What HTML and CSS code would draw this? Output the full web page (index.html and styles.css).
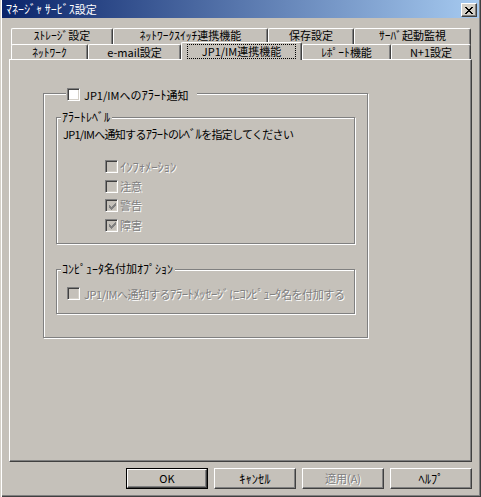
FILE: index.html
```html
<!DOCTYPE html>
<html lang="ja">
<head>
<meta charset="utf-8">
<title>ﾏﾈｰｼﾞｬ ｻｰﾋﾞｽ設定</title>
<link rel="stylesheet" href="styles.css">
</head>
<body>
<div class="window">
  <div class="titlebar">
    <span class="title"><span class="hk">ﾏﾈｰｼﾞｬ ｻｰﾋﾞｽ</span>設定</span>
    <span class="close"><svg width="8" height="7" viewBox="0 0 8 7" shape-rendering="crispEdges"><path d="M0 0h2v1H0zM6 0h2v1H6zM1 1h2v1H1zM5 1h2v1H5zM2 2h4v1H2zM3 3h2v1H3zM2 4h4v1H2zM1 5h2v1H1zM5 5h2v1H5zM0 6h2v1H0zM6 6h2v1H6z" fill="#000"/></svg></span>
  </div>
  <div class="tabs">
    <div class="tabrow row1">
      <div class="tab w102"><span class="hk">ｽﾄﾚｰｼﾞ</span>設定</div>
      <div class="tab w155"><span class="hk">ﾈｯﾄﾜｰｸｽｲｯﾁ</span>連携機能</div>
      <div class="tab w86">保存設定</div>
      <div class="tab w117"><span class="hk">ｻｰﾊﾞ</span>起動監視</div>
    </div>
    <div class="tabrow row2">
      <div class="tab w77"><span class="hk">ﾈｯﾄﾜｰｸ</span></div>
      <div class="tab w93">e-mail設定</div>
      <div class="tab active w121"><span class="focus">JP1/IM連携機能</span></div>
      <div class="tab w89"><span class="hk">ﾚﾎﾟｰﾄ</span>機能</div>
      <div class="tab w80">N+1設定</div>
    </div>
  </div>
  <div class="panel">
    <div class="group outer">
      <div class="legend legend-check">
        <span class="cb"></span><span class="label">JP1/IMへの<span class="hk">ｱﾗｰﾄ</span>通知</span>
      </div>
      <div class="group g1">
        <div class="legend"><span class="hk">ｱﾗｰﾄﾚﾍﾞﾙ</span></div>
        <p class="desc">JP1/IMへ通知する<span class="hk">ｱﾗｰﾄ</span>の<span class="hk">ﾚﾍﾞﾙ</span>を指定してください</p>
        <ul class="levels">
          <li class="check disabled"><span class="cb"></span><span class="label"><span class="hk">ｲﾝﾌｫﾒｰｼｮﾝ</span></span></li>
          <li class="check disabled"><span class="cb"></span><span class="label">注意</span></li>
          <li class="check disabled"><span class="cb checked"><svg width="7" height="7" viewBox="0 0 7 7" shape-rendering="crispEdges"><path d="M6 0h1v1H6zM5 1h2v1H5zM0 2h1v1H0zM4 2h3v1H4zM0 3h2v1H0zM3 3h3v1H3zM0 4h5v1H0zM1 5h3v1H1zM2 6h1v1H2z" fill="#808080"/></svg></span><span class="label">警告</span></li>
          <li class="check disabled"><span class="cb checked"><svg width="7" height="7" viewBox="0 0 7 7" shape-rendering="crispEdges"><path d="M6 0h1v1H6zM5 1h2v1H5zM0 2h1v1H0zM4 2h3v1H4zM0 3h2v1H0zM3 3h3v1H3zM0 4h5v1H0zM1 5h3v1H1zM2 6h1v1H2z" fill="#808080"/></svg></span><span class="label">障害</span></li>
        </ul>
      </div>
      <div class="group g2">
        <div class="legend"><span class="hk">ｺﾝﾋﾟｭｰﾀ</span>名付加<span class="hk">ｵﾌﾟｼｮﾝ</span></div>
        <div class="check disabled option"><span class="cb"></span><span class="label">JP1/IMへ通知する<span class="hk">ｱﾗｰﾄﾒｯｾｰｼﾞ</span>に<span class="hk">ｺﾝﾋﾟｭｰﾀ</span>名を付加する</span></div>
      </div>
    </div>
  </div>
  <div class="buttons">
    <span class="btn default"><span class="btn-inner">OK</span></span>
    <span class="btn"><span class="btn-inner"><span class="hk">ｷｬﾝｾﾙ</span></span></span>
    <span class="btn disabled"><span class="btn-inner">適用(A)</span></span>
    <span class="btn"><span class="btn-inner"><span class="hk">ﾍﾙﾌﾟ</span></span></span>
  </div>
</div>
</body>
</html>
```
FILE: styles.css
```css
* { box-sizing: border-box; }
html, body { margin: 0; padding: 0; }
body {
  width: 481px;
  height: 497px;
  overflow: hidden;
  background: #c5c1ba;
  font-family: "Noto Sans CJK JP", "Noto Sans", sans-serif;
  font-size: 11px;
  color: #000;
}
.hk { font-size: 12.5px; }
.window {
  width: 481px;
  height: 497px;
  padding: 0 2px 2px 2px;
  background: #c5c1ba;
  box-shadow: inset 1px 0 #d4d0c8, inset 2px 0 #fff, inset -1px -1px #404040, inset -2px -2px #808080;
  display: flex;
  flex-direction: column;
}
.titlebar {
  height: 18px;
  flex: none;
  background: linear-gradient(to right, #0a246a, #a6caf0);
  display: flex;
  align-items: center;
  justify-content: space-between;
  padding: 0 2px 0 4px;
}
.title {
  color: #fff;
  font-size: 11px;
  line-height: 14px;
  white-space: pre;
}
.title .hk { font-size: 12px; }
.close {
  width: 16px;
  height: 14px;
  margin-top: 2px;
  background: #d4d0c8;
  border: 1px solid;
  border-color: #fff #404040 #404040 #fff;
  box-shadow: inset -1px -1px #808080;
  display: flex;
  align-items: center;
  justify-content: center;
}
.close svg { display: block; }

/* tabs */
.tabs {
  flex: none;
  margin: 10px 0 0 9px;
  display: flex;
  flex-direction: column;
}
.tabrow {
  display: flex;
  height: 16px;
}
.row2 { height: 15px; }
.tab {
  height: 100%;
  border-top: 1px solid #fff;
  border-left: 1px solid #fff;
  border-right: 1px solid #404040;
  border-radius: 2px 2px 0 0;
  box-shadow: inset -1px 0 #808080;
  text-align: center;
  line-height: 14px;
  white-space: nowrap;
  background: #c5c1ba;
}
.tab .hk { font-size: 11.5px; }
.row1 .tab { height: 17px; line-height: 12px; }
.tab.active {
  position: relative;
  z-index: 2;
  height: 18px;
  margin-top: -2px;
  line-height: 15px;
  padding-top: 1px;
}
.focus {
  display: inline-block;
  outline: 1px dotted #000;
  outline-offset: 0;
  line-height: 13px;
  padding: 0 14px;
}
.w102 { width: 102px; }
.w155 { width: 155px; }
.w86 { width: 86px; }
.w117 { width: 117px; }
.w77 { width: 77px; }
.w93 { width: 93px; }
.w121 { width: 121px; }
.w89 { width: 89px; }
.w80 { width: 80px; }

/* panel */
.panel {
  flex: none;
  margin: 0 7px 0 7px;
  height: 403px;
  border-top: 1px solid #fff;
  border-left: 1px solid #fff;
  border-right: 1px solid #404040;
  border-bottom: 1px solid #404040;
  box-shadow: inset -1px -1px #808080;
  padding: 33px 0 0 33px;
}

/* group boxes */
.group {
  border: 1px solid #808080;
  box-shadow: inset 1px 1px #fff, 1px 1px #fff;
}
.outer {
  width: 325px;
  height: 245px;
  padding: 0 0 0 12px;
}
.legend {
  display: flex;
  width: max-content;
  align-items: center;
  height: 13px;
  line-height: 13px;
  background: #c5c1ba;
  white-space: nowrap;
}
.legend-check {
  margin: -6px 0 0 10px;
  width: 131px;
  padding-left: 1px;
}
.legend-check .label { margin-left: 4px; }
.g1 {
  width: 299px;
  height: 127px;
  margin-top: 16px;
}
.g1 > .legend, .g2 > .legend {
  margin: -8px 0 0 4px;
  padding: 0 2px 0 1px;
}
.g1 > .legend .hk, .g2 > .legend .hk { font-size: 12px; }
.desc {
  margin: 4px 0 0 6px;
  line-height: 13px;
  height: 13px;
  white-space: nowrap;
  letter-spacing: -0.7px;
}
.levels {
  list-style: none;
  margin: 17px 0 0 48px;
  padding: 0;
}
.levels .check { height: 19.5px; }
.check {
  display: flex;
  align-items: center;
  white-space: nowrap;
}
.check .label { margin-left: 2px; line-height: 13px; }
.g2 {
  width: 299px;
  height: 45px;
  margin-top: 25px;
}
.option {
  margin: 12px 0 0 10px;
  height: 13px;
}
.option .label { margin-left: 4px; letter-spacing: -0.4px; }

/* checkbox */
.cb {
  display: inline-flex;
  align-items: center;
  justify-content: center;
  flex: none;
  width: 13px;
  height: 13px;
  border: 1px solid;
  border-color: #808080 #fff #fff #808080;
  box-shadow: inset 1px 1px #404040, inset -1px -1px #d4d0c8;
  background: #fff;
}
.cb svg { display: block; margin: 1px 0 0 1px; }
.disabled .cb { background: #c5c1ba; }
.disabled .label {
  color: #808080;
  text-shadow: 1px 1px 0 #fff;
}

/* buttons */
.buttons {
  flex: none;
  display: flex;
  justify-content: flex-end;
  gap: 6px;
  margin: 6px 7px 0 0;
}
.btn {
  width: 82px;
  height: 21px;
  display: flex;
  border: 1px solid;
  border-color: #fff #404040 #404040 #fff;
  box-shadow: inset -1px -1px #808080;
}
.btn-inner {
  flex: 1;
  display: flex;
  align-items: center;
  justify-content: center;
  line-height: 13px;
}
.btn.default {
  border: 1px solid #000;
  box-shadow: none;
}
.btn.default .btn-inner {
  border: 1px solid;
  border-color: #fff #404040 #404040 #fff;
  box-shadow: inset -1px -1px #808080;
}
.btn.disabled .btn-inner {
  color: #808080;
  text-shadow: 1px 1px 0 #fff;
}
```
